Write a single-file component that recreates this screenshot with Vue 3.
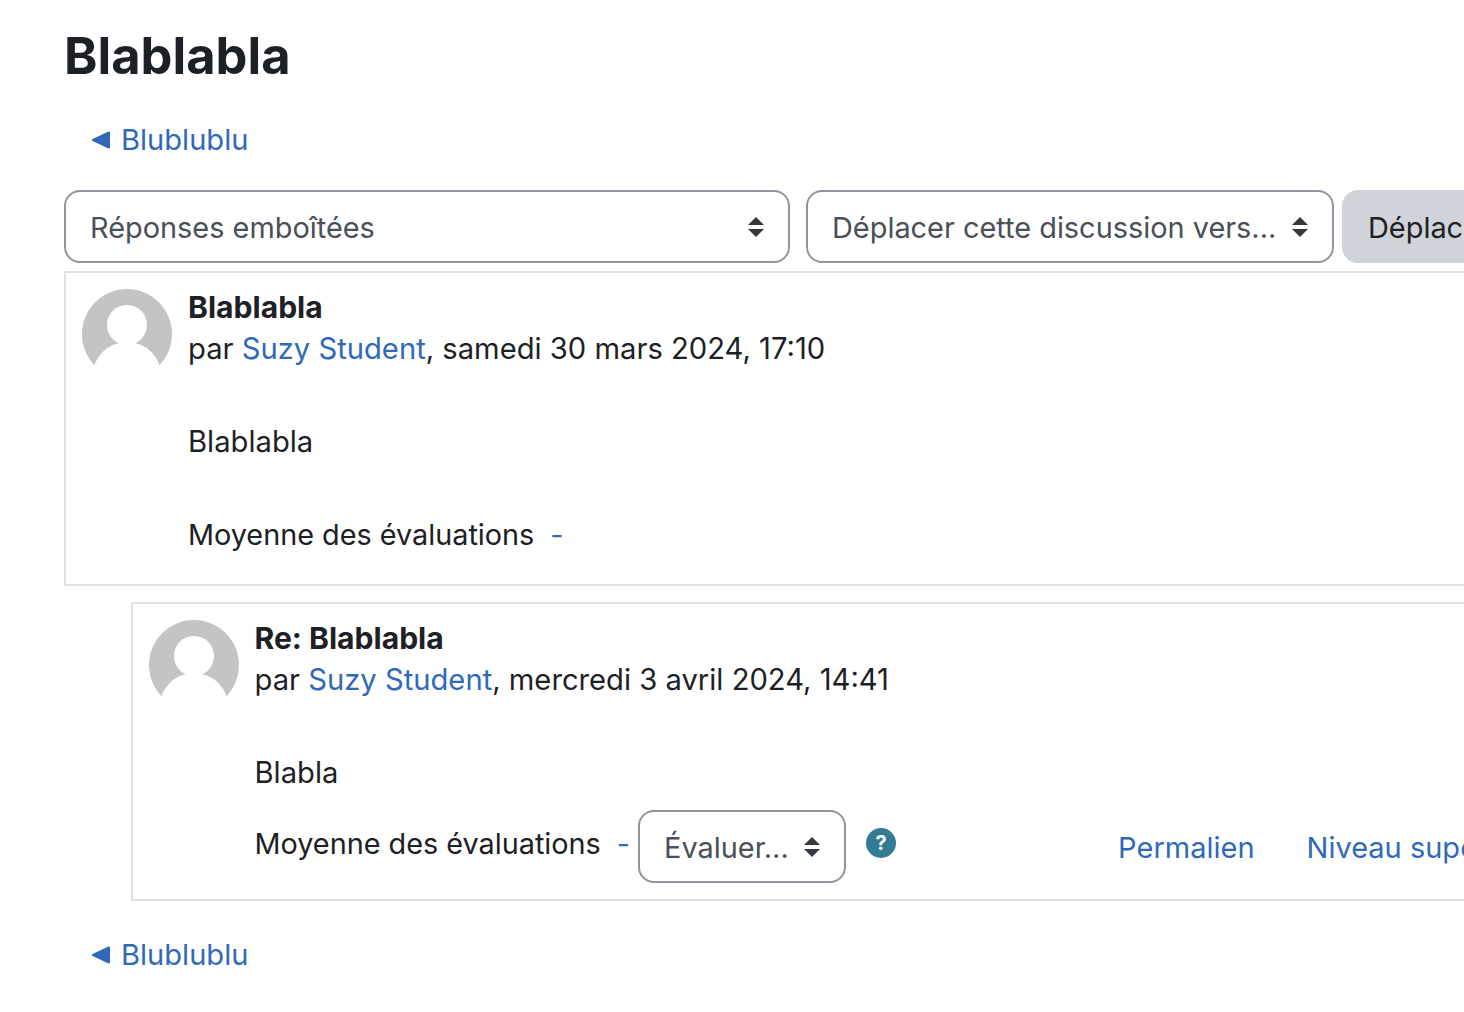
<script setup>
const selectClass = "fake-select";
</script>

<template>
  <div class="page">
    <h1 class="page-title">Blablabla</h1>
    <a class="back-link" href="#">
      <svg class="back-arrow" viewBox="0 0 20 20" width="20" height="20"><path d="M2 10 L18 2.5 V17.5 Z" fill="#3069b7" stroke="#3069b7" stroke-width="2" stroke-linejoin="round" /></svg>
      Blublublu
    </a>

    <div class="controls">
      <div :class="selectClass" class="sel-mode">
        <span>Réponses emboîtées</span>
        <svg class="updown" viewBox="0 0 16 20" width="16" height="20"><path d="M8 0 L16 8 H0 Z M8 20 L0 12 H16 Z" fill="#343a40" /></svg>
      </div>
      <div :class="selectClass" class="sel-move">
        <span>Déplacer cette discussion vers...</span>
        <svg class="updown" viewBox="0 0 16 20" width="16" height="20"><path d="M8 0 L16 8 H0 Z M8 20 L0 12 H16 Z" fill="#343a40" /></svg>
      </div>
      <button class="move-btn">Déplacer</button>
    </div>

    <div class="post">
      <svg class="avatar" viewBox="0 0 90 90" width="90" height="90">
        <circle cx="45" cy="45" r="45" fill="#c4c4c4" />
        <circle cx="45" cy="36" r="20" fill="#fff" />
        <ellipse cx="45" cy="86" rx="34" ry="33" fill="#fff" />
      </svg>
      <div class="post-body">
        <div class="subject">Blablabla</div>
        <div class="byline">par <a href="#">Suzy Student</a>, samedi 30 mars 2024, 17:10</div>
        <div class="content first">Blablabla</div>
        <div class="rating first-rating">Moyenne des évaluations <a class="dash" href="#">-</a></div>
      </div>
    </div>

    <div class="post reply">
      <svg class="avatar" viewBox="0 0 90 90" width="90" height="90">
        <circle cx="45" cy="45" r="45" fill="#c4c4c4" />
        <circle cx="45" cy="36" r="20" fill="#fff" />
        <ellipse cx="45" cy="86" rx="34" ry="33" fill="#fff" />
      </svg>
      <div class="post-body">
        <div class="subject">Re: Blablabla</div>
        <div class="byline">par <a href="#">Suzy Student</a>, mercredi 3 avril 2024, 14:41</div>
        <div class="content second">Blabla</div>
        <div class="footer-row">
          <div class="rating">Moyenne des évaluations <a class="dash" href="#">-</a></div>
          <div :class="selectClass" class="sel-rate">
            <span>Évaluer...</span>
            <svg class="updown" viewBox="0 0 16 20" width="16" height="20"><path d="M8 0 L16 8 H0 Z M8 20 L0 12 H16 Z" fill="#343a40" /></svg>
          </div>
          <svg class="help" viewBox="0 0 30 30" width="30" height="30">
            <circle cx="15" cy="15" r="15" fill="#327d93" />
            <text x="15" y="22" text-anchor="middle" class="help-mark">?</text>
          </svg>
          <div class="post-links">
            <a href="#">Permalien</a>
            <a href="#">Niveau supérieur</a>
          </div>
        </div>
      </div>
    </div>

    <a class="back-link bottom" href="#">
      <svg class="back-arrow" viewBox="0 0 20 20" width="20" height="20"><path d="M2 10 L18 2.5 V17.5 Z" fill="#3069b7" stroke="#3069b7" stroke-width="2" stroke-linejoin="round" /></svg>
      Blublublu
    </a>
  </div>
</template>

<style>
html, body {
  margin: 0;
  background: #fff;
  overflow: hidden;
}
</style>

<style scoped>
.page {
  width: 1700px;
  height: 1012px;
  box-sizing: border-box;
  padding: 26px 0 0 64px;
  font-family: Inter, "Liberation Sans", sans-serif;
  font-size: 29.2px;
  line-height: 41px;
  color: #1d2125;
}
a {
  color: #3069b7;
  text-decoration: none;
}
.page-title {
  margin: 0;
  font-size: 50.6px;
  line-height: 60px;
  font-weight: 700;
}
.back-link {
  display: flex;
  align-items: center;
  gap: 10px;
  margin: 33px 0 0 27px;
  height: 41px;
  font-size: 29.1px;
}
.back-link.bottom {
  margin-top: 33px;
}
.controls {
  display: flex;
  margin-top: 30px;
  height: 73px;
}
.fake-select {
  box-sizing: border-box;
  height: 73px;
  display: flex;
  align-items: center;
  justify-content: space-between;
  padding: 0 24px;
  border: 2px solid #8f959e;
  border-radius: 16px;
  color: #495057;
  background: #fff;
  white-space: nowrap;
  font-size: 28.9px;
}
.fake-select span {
  margin-top: 1px;
}
.sel-mode {
  width: 726px;
}
.sel-move {
  width: 528px;
  margin-left: 16px;
}
.move-btn {
  margin-left: 8px;
  width: 200px;
  height: 73px;
  padding: 1px 26px 0;
  border: 0;
  border-radius: 16px;
  background: #ced4da;
  color: #1d2125;
  font: inherit;
  font-size: 28.9px;
  text-align: left;
}
.post {
  box-sizing: border-box;
  display: flex;
  width: 1636px;
  height: 315px;
  margin-top: 8px;
  padding: 16px 16px 0;
  border: 2px solid #dee2e6;
}
.post.reply {
  width: 1569px;
  height: 299px;
  margin: 16px 0 0 67px;
}
.avatar {
  flex: none;
  margin-right: 16px;
}
.post-body {
  flex: 1;
  min-width: 0;
  margin-top: -2px;
}
.reply .post-body {
  margin-left: -0.5px;
}
.subject {
  font-size: 30.1px;
  font-weight: 700;
}
.content.first,
.first-rating,
.content.second {
  margin-top: 52px;
}
.rating {
  font-size: 28.8px;
  white-space: nowrap;
}
.dash {
  margin-left: 8px;
}
.footer-row {
  display: flex;
  align-items: flex-start;
  margin-top: 11px;
}
.footer-row .rating {
  padding-top: 19px;
}
.sel-rate {
  width: 208px;
  margin: 6px 0 0 8px;
}
.help {
  margin: 24px 0 0 20px;
}
.help-mark {
  font-size: 20px;
  font-weight: 700;
  fill: #fff;
}
.post-links {
  display: flex;
  gap: 52px;
  margin: 23px 0 0 222px;
  white-space: nowrap;
  font-size: 29px;
}
</style>
